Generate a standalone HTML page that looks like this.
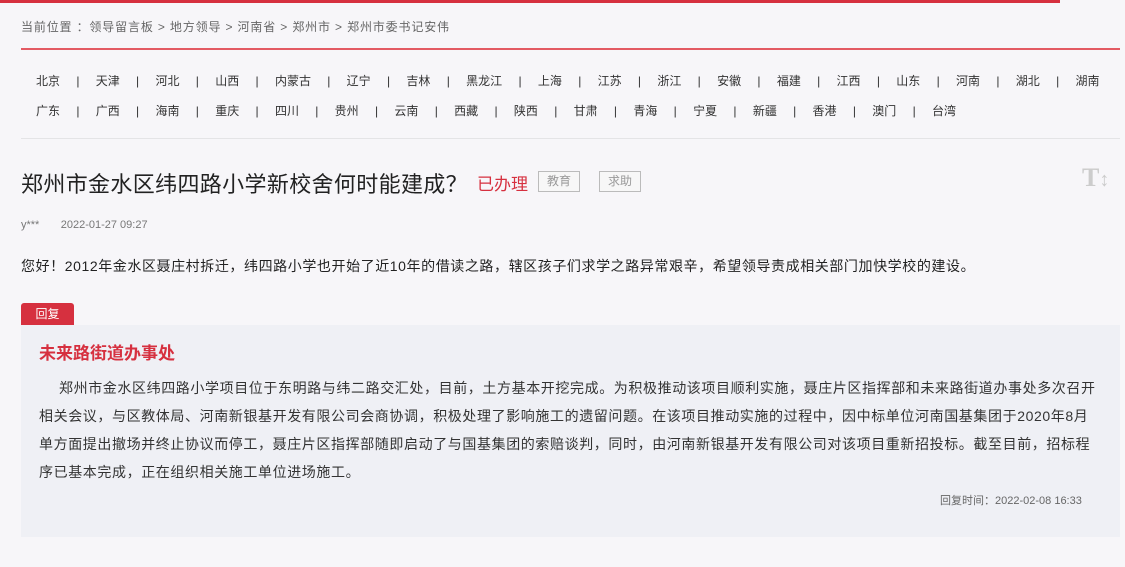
<!DOCTYPE html>
<html><head><meta charset="utf-8"><style>
*{margin:0;padding:0;box-sizing:border-box}
body{width:1125px;height:567px;background:#f7f6f9;font-family:"Liberation Sans","Noto Sans CJK SC",sans-serif;color:#333;position:relative;overflow:hidden}
.abs{position:absolute;white-space:nowrap}
.topbar{left:0;top:0;width:1060px;height:3px;background:#d6303f}
.crumb{left:21px;top:18px;font-size:12px;color:#666;letter-spacing:0.85px}
.redline{left:21px;top:48px;width:1099px;height:2px;background:#e35a63}
.nav{left:36px;font-size:12px;color:#333}
.nav span{display:inline-block}
.nav i{font-style:normal;display:inline-block;margin:0 16.3px;color:#333}
.gray{left:21px;top:138px;width:1099px;height:1px;background:#e4e4e6}
.title{left:21px;top:167px;font-size:22px;color:#222;letter-spacing:0.35px}
.status{left:477px;top:170px;font-size:17px;color:#d6303f}
.tag{top:171px;height:21px;border:1px solid #bbb;font-size:12px;color:#999;line-height:19px;padding:0 8px;background:#f7f7f7}
.meta{left:21px;top:219px;font-size:11px;color:#777}
.body{left:21px;top:256px;font-size:14px;color:#222;letter-spacing:0.58px}
.rtag{left:21px;top:303px;width:53px;height:22px;background:#d6303f;color:#fff;font-size:12px;line-height:22px;text-align:center;border-radius:3px 3px 0 0}
.box{left:21px;top:325px;width:1099px;height:212px;background:#eff0f5}
.org{left:39px;top:339px;font-size:17px;color:#d6303f;font-weight:bold}
.txt{left:39px;top:374px;font-size:14px;line-height:28px;color:#333;letter-spacing:0.6px}
.time{left:940px;top:492px;font-size:11px;color:#666}
</style></head><body>
<div class="abs topbar"></div>
<div class="abs crumb">当前位置 ：领导留言板 &gt; 地方领导 &gt; 河南省 &gt; 郑州市 &gt; 郑州市委书记安伟</div>
<div class="abs redline"></div>
<div class="abs nav" style="top:72px"><span>北京</span><i>|</i><span>天津</span><i>|</i><span>河北</span><i>|</i><span>山西</span><i>|</i><span>内蒙古</span><i>|</i><span>辽宁</span><i>|</i><span>吉林</span><i>|</i><span>黑龙江</span><i>|</i><span>上海</span><i>|</i><span>江苏</span><i>|</i><span>浙江</span><i>|</i><span>安徽</span><i>|</i><span>福建</span><i>|</i><span>江西</span><i>|</i><span>山东</span><i>|</i><span>河南</span><i>|</i><span>湖北</span><i>|</i><span>湖南</span></div>
<div class="abs nav" style="top:102px"><span>广东</span><i>|</i><span>广西</span><i>|</i><span>海南</span><i>|</i><span>重庆</span><i>|</i><span>四川</span><i>|</i><span>贵州</span><i>|</i><span>云南</span><i>|</i><span>西藏</span><i>|</i><span>陕西</span><i>|</i><span>甘肃</span><i>|</i><span>青海</span><i>|</i><span>宁夏</span><i>|</i><span>新疆</span><i>|</i><span>香港</span><i>|</i><span>澳门</span><i>|</i><span>台湾</span></div>
<div class="abs gray"></div>
<div class="abs title">郑州市金水区纬四路小学新校舍何时能建成？</div>
<div class="abs status">已办理</div>
<div class="abs tag" style="left:538px">教育</div>
<div class="abs tag" style="left:599px">求助</div>
<div class="abs" style="left:1082px;top:163px;font-family:'Liberation Serif',serif;font-size:26px;color:#ccc;font-weight:bold">T<span style="font-size:20px;font-weight:normal">↕</span></div>
<div class="abs meta">y***&nbsp;&nbsp;&nbsp;&nbsp;&nbsp;&nbsp;&nbsp;2022-01-27 09:27</div>
<div class="abs body">您好！2012年金水区聂庄村拆迁，纬四路小学也开始了近10年的借读之路，辖区孩子们求学之路异常艰辛，希望领导责成相关部门加快学校的建设。</div>
<div class="abs rtag">回复</div>
<div class="abs box"></div>
<div class="abs org">未来路街道办事处</div>
<div class="abs txt"><span style="padding-left:20px"></span>郑州市金水区纬四路小学项目位于东明路与纬二路交汇处，目前，土方基本开挖完成。为积极推动该项目顺利实施，聂庄片区指挥部和未来路街道办事处多次召开<br>相关会议，与区教体局、河南新银基开发有限公司会商协调，积极处理了影响施工的遗留问题。在该项目推动实施的过程中，因中标单位河南国基集团于2020年8月<br>单方面提出撤场并终止协议而停工，聂庄片区指挥部随即启动了与国基集团的索赔谈判，同时，由河南新银基开发有限公司对该项目重新招投标。截至目前，招标程<br>序已基本完成，正在组织相关施工单位进场施工。</div>
<div class="abs time">回复时间：2022-02-08 16:33</div>
</body></html>
